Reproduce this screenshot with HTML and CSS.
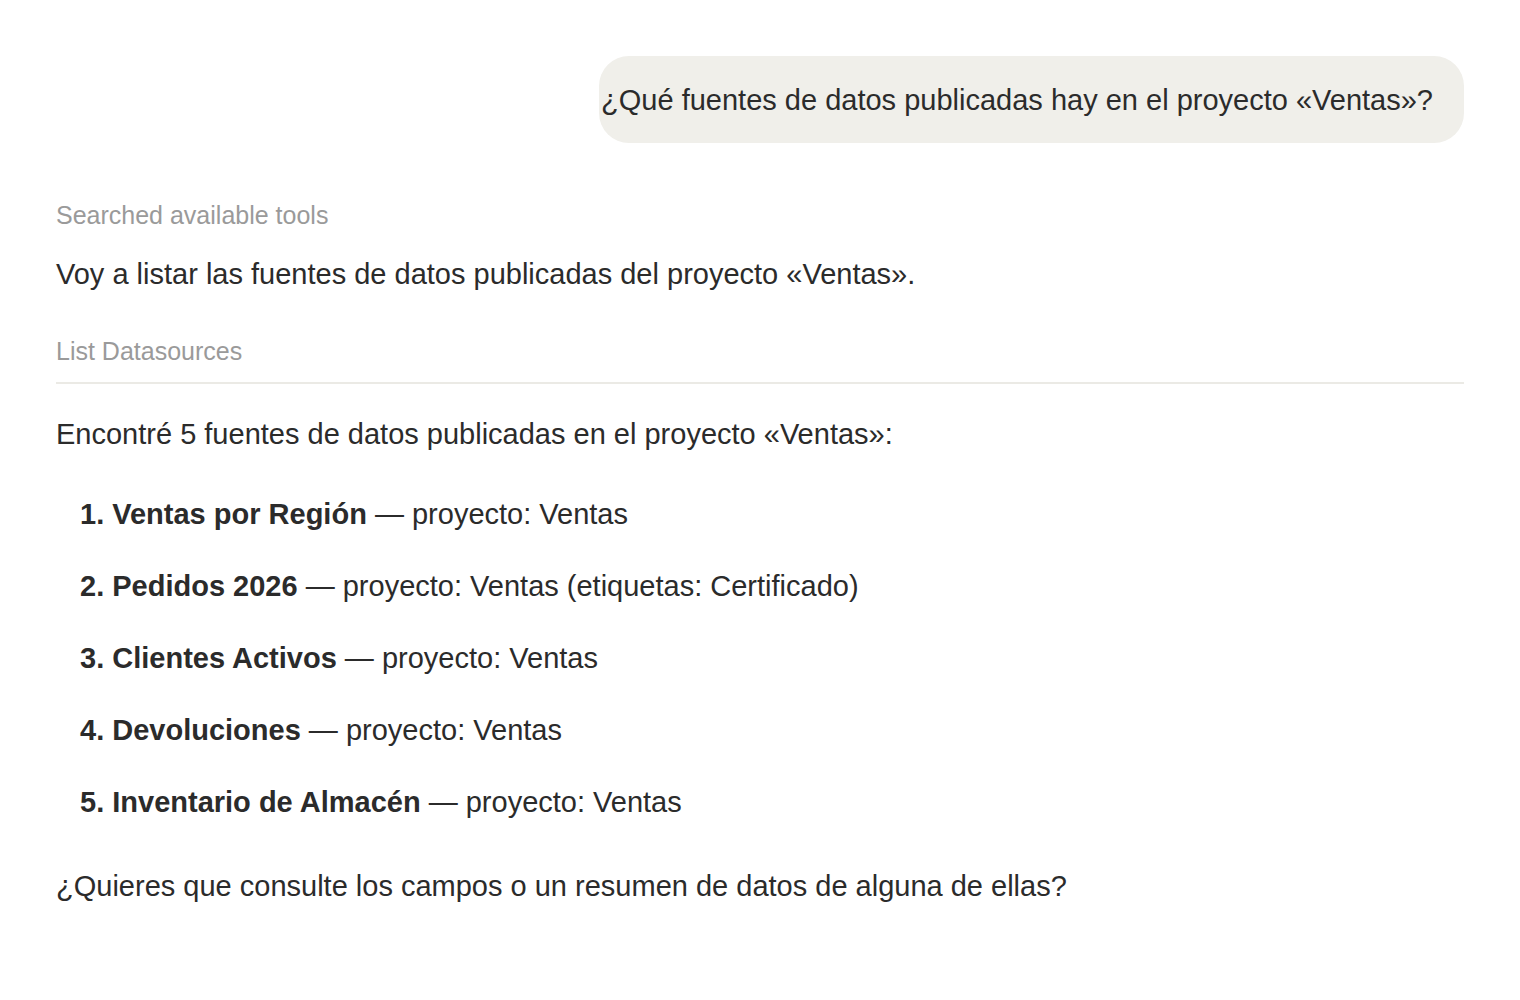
FILE: index.html
```html
<!DOCTYPE html>
<html lang="es">
<head>
    <meta charset="UTF-8">
    <meta name="viewport" content="width=device-width, initial-scale=1.0">
    <title>Chat - Ventas</title>
    <link rel="stylesheet" href="styles.css">
</head>
<body>
    <div class="chat">
        <div class="user-row">
            <div class="user-bubble">¿Qué fuentes de datos publicadas hay en el proyecto «Ventas»?</div>
        </div>

        <div class="assistant">
            <div class="tool-label">Searched available tools</div>
            <p class="msg msg-first">Voy a listar las fuentes de datos publicadas del proyecto «Ventas».</p>

            <div class="tool-label tool-divider">List Datasources</div>

            <p class="msg msg-after-tool">Encontré 5 fuentes de datos publicadas en el proyecto «Ventas»:</p>

            <ol class="sources">
                <li><strong>Ventas por Región</strong> — proyecto: Ventas</li>
                <li><strong>Pedidos 2026</strong> — proyecto: Ventas (etiquetas: Certificado)</li>
                <li><strong>Clientes Activos</strong> — proyecto: Ventas</li>
                <li><strong>Devoluciones</strong> — proyecto: Ventas</li>
                <li><strong>Inventario de Almacén</strong> — proyecto: Ventas</li>
            </ol>

            <p class="msg msg-last">¿Quieres que consulte los campos o un resumen de datos de alguna de ellas?</p>
        </div>
    </div>
</body>
</html>
```

FILE: styles.css
```css
:root {
    --text: #2b2b2b;
    --muted: #9a9a9a;
    --bubble: #f0efea;
    --line: #ebeae5;
}

body {
    font-family: 'Liberation Sans', Arial, sans-serif;
    background: #fff;
    color: var(--text);
    margin: 0;
}

.chat {
    padding: 56px 56px 40px 56px;
}

.user-row {
    display: flex;
    justify-content: flex-end;
}

.user-bubble {
    background: var(--bubble);
    border-radius: 30px;
    font-size: 29px;
    line-height: 89px;
    height: 87px;
    padding: 0 31px 0 2px;
}

.assistant {
    margin-top: 57px;
}

.tool-label {
    color: var(--muted);
    font-size: 25px;
    line-height: 30px;
}

.tool-divider {
    margin-top: 42px;
    padding-bottom: 16px;
    border-bottom: 2px solid var(--line);
}

.msg {
    font-size: 29px;
    line-height: 40px;
    margin: 0;
}

.msg-first {
    margin-top: 24px;
}

.msg-after-tool {
    margin-top: 30px;
}

.msg-last {
    margin-top: 44px;
}

.sources {
    list-style-position: inside;
    padding-left: 24px;
    margin: 40px 0 0 0;
    font-size: 29px;
    line-height: 40px;
}

.sources li + li {
    margin-top: 32px;
}

.sources li::marker {
    font-weight: bold;
}
```
